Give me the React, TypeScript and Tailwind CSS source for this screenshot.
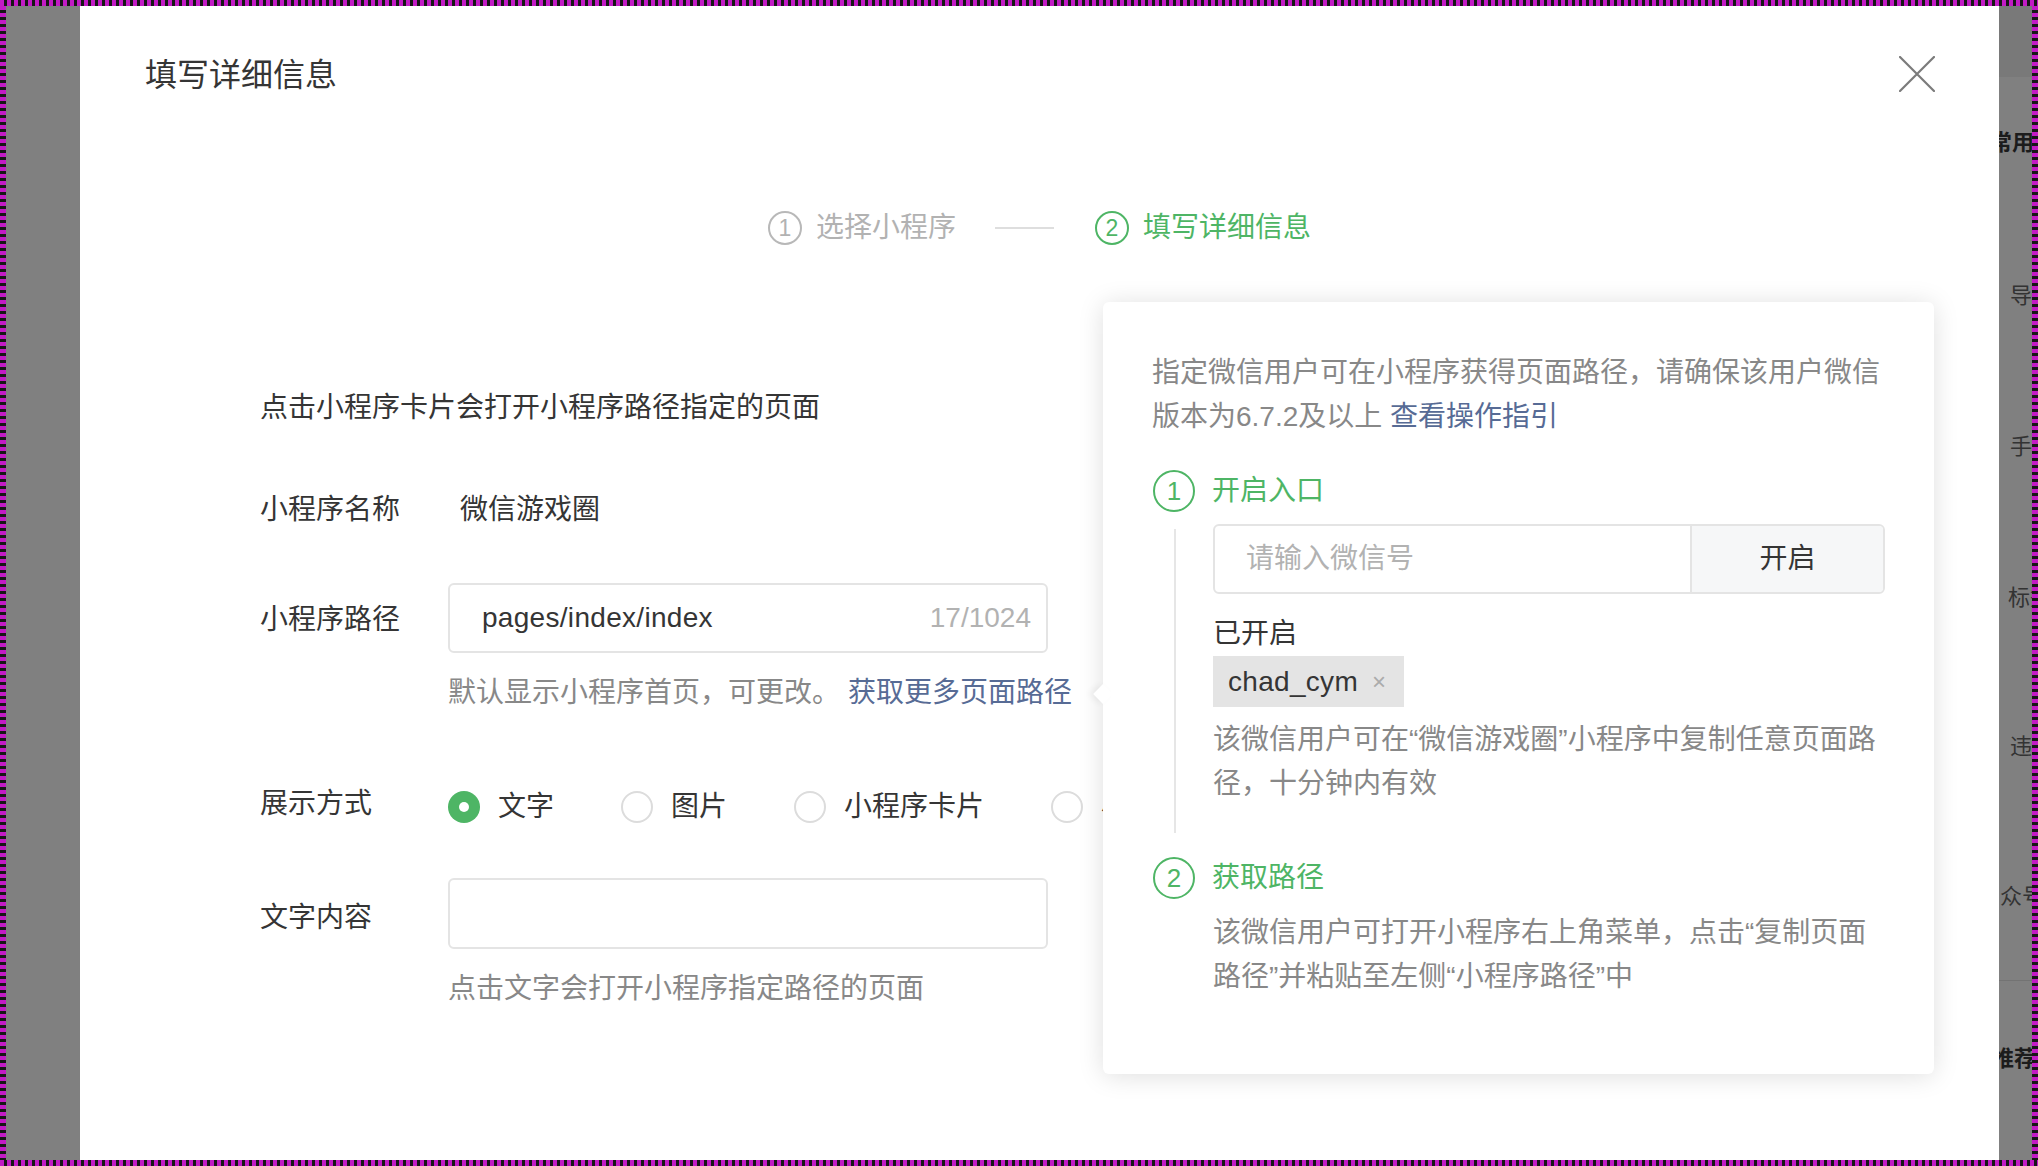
import React from 'react';

function StepCircle({ n, active, size }: { n: number; active: boolean; size: 'sm' | 'lg' }) {
  return (
    <div
      className={`flex items-center justify-center rounded-full border-2 shrink-0 ${
        size === 'sm' ? 'w-[34px] h-[34px] text-[23px]' : 'w-[42px] h-[42px] text-[26px]'
      } ${active ? 'border-[#4eb565] text-[#4eb565]' : 'border-[#b8b8b8] text-[#b2b2b2]'}`}
    >
      <span className="leading-none">{n}</span>
    </div>
  );
}

function Radio({ label, checked, first }: { label: string; checked?: boolean; first?: boolean }) {
  return (
    <div className={`flex items-center shrink-0 ${first ? '' : 'ml-[67px]'}`}>
      {checked ? (
        <div className="w-[32px] h-[32px] rounded-full bg-[#4eb565] flex items-center justify-center">
          <div className="w-[10px] h-[10px] rounded-full bg-white" />
        </div>
      ) : (
        <div className="w-[32px] h-[32px] rounded-full border-2 border-[#dcdcdc] bg-white" />
      )}
      <span className="ml-[18px] whitespace-nowrap text-[#353535]">{label}</span>
    </div>
  );
}

function Popover() {
  return (
    <div className="absolute left-[1023px] top-[296px] w-[831px] h-[772px] bg-white rounded-[6px] shadow-[0_2px_26px_rgba(0,0,0,0.13)] pl-[49px] pt-[49px]">
      {/* arrow pointing at the link */}
      <div className="absolute -left-[7px] top-[385px] w-[14px] h-[14px] rotate-45 bg-white shadow-[-3px_3px_6px_rgba(0,0,0,0.06)]" />

      <p className="text-[#888888] leading-[44px] whitespace-nowrap">
        指定微信用户可在小程序获得页面路径，请确保该用户微信
        <br />
        版本为6.7.2及以上 <span className="text-[#576b95]">查看操作指引</span>
      </p>

      {/* step 1 */}
      <div className="mt-[30px] h-[44px] flex items-center">
        <div className="ml-[1px]">
          <StepCircle n={1} active size="lg" />
        </div>
        <span className="ml-[17px] text-[#4eb565]">开启入口</span>
      </div>
      <div className="flex">
        <div className="ml-[22px] mt-[16px] w-[2px] bg-[#e6e6e6] shrink-0" />
        <div className="pl-[37px] pt-[11px] pb-[27px]">
          <div className="w-[672px] h-[70px] flex border-2 border-[#e4e4e4] rounded-[6px] overflow-hidden">
            <div className="flex-1 flex items-center pl-[31px] text-[#b2b2b2]">请输入微信号</div>
            <div className="w-[193px] flex items-center justify-center bg-[#f6f7f8] border-l-2 border-[#e4e4e4] text-[#353535]">
              开启
            </div>
          </div>
          <div className="mt-[20px] h-[40px] leading-[40px] text-[#353535]">已开启</div>
          <div className="mt-[2px] inline-flex items-center h-[51px] pl-[15px] pr-[18px] bg-[#e4e4e4]">
            <span className="text-[#353535] tracking-[0.3px]">chad_cym</span>
            <span className="ml-[14px] text-[24px] text-[#ababab]">×</span>
          </div>
          <p className="mt-[11px] text-[#888888] leading-[44px] whitespace-nowrap">
            该微信用户可在“微信游戏圈”小程序中复制任意页面路
            <br />
            径，十分钟内有效
          </p>
        </div>
      </div>

      {/* step 2 */}
      <div className="mt-[23px] h-[44px] flex items-center">
        <div className="ml-[1px]">
          <StepCircle n={2} active size="lg" />
        </div>
        <span className="ml-[17px] text-[#4eb565]">获取路径</span>
      </div>
      <p className="ml-[61px] mt-[11px] text-[#888888] leading-[44px] whitespace-nowrap">
        该微信用户可打开小程序右上角菜单，点击“复制页面
        <br />
        路径”并粘贴至左侧“小程序路径”中
      </p>
    </div>
  );
}

function Modal() {
  return (
    <div className="relative w-[1919px] h-full bg-white flex flex-col shrink-0">
      {/* header */}
      <div className="mt-[47px] h-[44px] flex items-center justify-between pl-[65px] pr-[64px]">
        <span className="text-[32px] leading-[44px] text-[#353535]">填写详细信息</span>
        <svg width="36" height="36" viewBox="0 0 36 36" className="text-[#7b7b7b] -mt-[2px]">
          <path d="M1 1L35 35M35 1L1 35" stroke="currentColor" strokeWidth="2.2" strokeLinecap="round" />
        </svg>
      </div>

      {/* steps */}
      <div className="mt-[111px] h-[40px] flex items-center justify-center">
        <StepCircle n={1} active={false} size="sm" />
        <span className="ml-[14px] text-[#b2b2b2] whitespace-nowrap">选择小程序</span>
        <div className="ml-[39px] mr-[41px] w-[59px] h-[2px] bg-[#dedede]" />
        <StepCircle n={2} active size="sm" />
        <span className="ml-[14px] text-[#4eb565] whitespace-nowrap">填写详细信息</span>
      </div>

      {/* form */}
      <div className="mt-[140px] pl-[180px] text-[#353535]">
        <div className="h-[40px] leading-[40px]">点击小程序卡片会打开小程序路径指定的页面</div>

        <div className="mt-[62px] h-[40px] flex items-center">
          <span className="w-[188px]">小程序名称</span>
          <span className="ml-[12px]">微信游戏圈</span>
        </div>

        <div className="mt-[53px] flex items-center">
          <span className="w-[188px] mt-[4px]">小程序路径</span>
          <div className="w-[600px] h-[70px] border-2 border-[#e4e4e4] rounded-[6px] flex items-center justify-between pl-[32px] pr-[15px]">
            <span className="text-[#353535] tracking-[0.3px]">pages/index/index</span>
            <span className="text-[#b2b2b2]">17/1024</span>
          </div>
        </div>
        <div className="mt-[20px] pl-[188px] h-[40px] leading-[40px] text-[#888888] whitespace-nowrap">
          默认显示小程序首页，可更改。<span className="ml-[8px] text-[#576b95]">获取更多页面路径</span>
        </div>

        <div className="mt-[74px] h-[40px] flex items-center">
          <span className="w-[188px] shrink-0 -mt-[6px]">展示方式</span>
          <Radio label="文字" checked first />
          <Radio label="图片" />
          <Radio label="小程序卡片" />
          <Radio label="小程序码" />
        </div>

        <div className="mt-[51px] flex items-center">
          <span className="w-[188px] mt-[8px]">文字内容</span>
          <div className="w-[600px] h-[71px] border-2 border-[#e4e4e4] rounded-[6px]" />
        </div>
        <div className="mt-[20px] pl-[188px] h-[40px] leading-[40px] text-[#888888]">
          点击文字会打开小程序指定路径的页面
        </div>
      </div>

      <Popover />
    </div>
  );
}

function PageBehind() {
  return (
    <div className="w-[33px] h-full overflow-hidden flex flex-col text-[22px] leading-[30px] whitespace-nowrap">
      <div className="h-[71px] bg-[#797979] shrink-0" />
      <div className="mt-[51px] -ml-[9px] font-bold text-[#1c1c1c]">常用</div>
      <div className="mt-[123px] ml-[11px] text-[#333333]">导航</div>
      <div className="mt-[121px] ml-[11px] text-[#333333]">手机</div>
      <div className="mt-[121px] ml-[9px] text-[#333333]">标签</div>
      <div className="mt-[119px] ml-[11px] text-[#333333]">违规</div>
      <div className="mt-[120px] ml-[1px] text-[#333333]">众号</div>
      <div className="mt-[68px] h-px bg-[#737373] shrink-0" />
      <div className="mt-[63px] -ml-[7px] font-bold text-[#1c1c1c]">推荐</div>
    </div>
  );
}

export default function App() {
  return (
    <div className="w-[2038px] h-[1166px] py-[6px] bg-[repeating-linear-gradient(90deg,#c21bc5_0px,#c21bc5_4px,#161616_4px,#161616_7px)] font-['Liberation_Sans','Noto_Sans_CJK_SC',sans-serif] text-[28px]">
      <div className="h-full px-[6px] bg-[repeating-linear-gradient(180deg,#c21bc5_0px,#c21bc5_4px,#161616_4px,#161616_7px)]">
        <div className="h-full flex bg-[#808080]">
          <div className="w-[74px] shrink-0" />
          <Modal />
          <PageBehind />
        </div>
      </div>
    </div>
  );
}
